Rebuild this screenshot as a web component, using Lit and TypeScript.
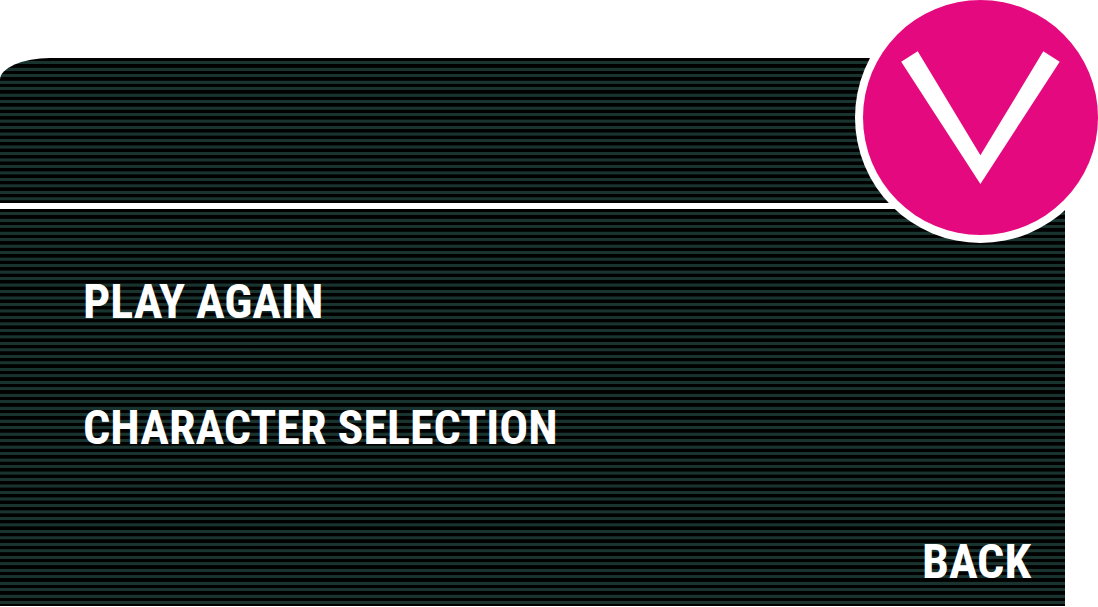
import { LitElement, html, css } from "lit";
import { customElement } from "lit/decorators.js";

@customElement("app-root")
export class AppRoot extends LitElement {
  static styles = css`
    :host {
      display: block;
      position: relative;
      box-sizing: border-box;
      min-height: 100vh;
      background: #fff;
      overflow: hidden;
      font-family: "Roboto Condensed", "Liberation Sans Narrow", "Roboto", sans-serif;
      --pitch: calc(188px / 29);
      --line: #19332f;
    }
    .dialog {
      display: flex;
      flex-direction: column;
      box-sizing: border-box;
      min-height: 100vh;
      padding: 58px 33px 1px 0;
    }
    .header,
    .menu {
      background: repeating-linear-gradient(
        to bottom,
        #000 0,
        #000 calc(var(--pitch) * 0.45),
        var(--line) calc(var(--pitch) * 0.54),
        var(--line) calc(var(--pitch) * 0.93),
        #000 var(--pitch)
      );
    }
    .header {
      height: 145px;
      margin-bottom: 6px;
      border-top-left-radius: 50px 22px;
    }
    .menu {
      flex: 1;
      display: flex;
      flex-direction: column;
      align-items: flex-start;
      padding: 61px 34px 12px 83px;
    }
    .item {
      margin: 0 0 62px;
      padding: 0;
      border: 0;
      background: none;
      color: #fff;
      font-family: inherit;
      font-size: 48px;
      font-weight: 700;
      line-height: 64px;
      text-transform: uppercase;
      white-space: nowrap;
      cursor: pointer;
    }
    .back {
      align-self: flex-end;
      margin: auto 0 0;
    }
    .toggle {
      position: absolute;
      top: 0;
      right: 0;
      width: 235px;
      height: 235px;
      padding: 0;
      border: 0;
      border-radius: 50%;
      background: #e5097f;
      box-shadow: 0 0 0 8px #fff;
      cursor: pointer;
    }
    .chevron {
      display: block;
      width: 100%;
      height: 100%;
    }
  `;

  render() {
    return html`
      <main class="dialog">
        <header class="header"></header>
        <nav class="menu" aria-label="Game menu">
          <button class="item" type="button">Play again</button>
          <button class="item" type="button">Character selection</button>
          <button class="item back" type="button">Back</button>
        </nav>
      </main>
      <button class="toggle" type="button" aria-label="Collapse menu">
        <svg class="chevron" viewBox="0 0 235 235" aria-hidden="true">
          <path fill="#fff" d="M38.2 61.7 54.7 51.3 117.4 155.3 180.3 51.3 196.7 61.7 117.4 184z" />
        </svg>
      </button>
    `;
  }
}
